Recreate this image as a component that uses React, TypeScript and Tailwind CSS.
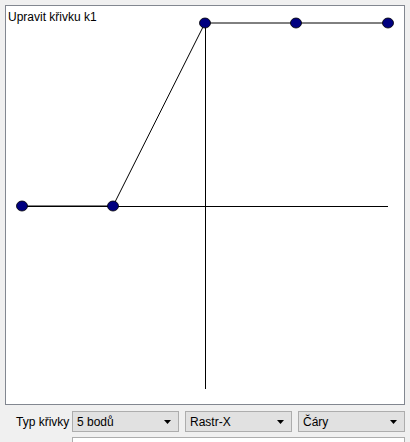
const pts = [
  [16, 200],
  [107, 200],
  [199, 17],
  [290, 17],
  [382, 17],
];

function Combo({ value }: { value: string }) {
  return (
    <div className="relative flex h-[21px] w-[107px] items-center border border-[#adadad] bg-[#e1e1e1] pl-[4px] text-[12px] text-black">
      <span>{value}</span>
      <svg className="absolute right-[6px] top-[8px]" width="8" height="4" viewBox="0 0 8 4">
        <path d="M0 0 H7 L3.5 4 Z" fill="#000" />
      </svg>
    </div>
  );
}

export default function App() {
  return (
    <div className="h-[442px] w-[410px] overflow-hidden bg-[#f0f0f0] px-[5px] pt-[5px] font-['Liberation_Sans',sans-serif]">
      <div className="relative h-[400px] w-[400px] border border-[#828790] bg-white">
        <div className="absolute left-[2px] top-[4px] text-[12px] leading-[15px] text-black">
          Upravit křivku k1
        </div>
        <svg width="398" height="398" viewBox="0 0 398 398">
          <line x1="16" y1="200.5" x2="382" y2="200.5" stroke="#000" strokeWidth="1" />
          <line x1="199.5" y1="17" x2="199.5" y2="383" stroke="#000" strokeWidth="1" />
          <polyline
            points={pts.map((p) => `${p[0]},${p[1]}`).join(" ")}
            fill="none"
            stroke="#000"
            strokeWidth="1"
          />
          {pts.map((p, i) => (
            <ellipse key={i} cx={p[0]} cy={p[1]} rx="5.5" ry="5" fill="#000080" stroke="#000" strokeWidth="0.8" />
          ))}
        </svg>
      </div>
      <div className="mt-[6px] flex items-center">
        <div className="w-[67px] pl-[11px] text-[12px] text-black">Typ křivky</div>
        <div className="flex gap-[6px]">
          <Combo value="5 bodů" />
          <Combo value="Rastr-X" />
          <Combo value="Čáry" />
        </div>
      </div>
      <div className="ml-[67px] mt-[5px] h-[20px] w-[333px] border border-[#adadad] bg-white" />
    </div>
  );
}
